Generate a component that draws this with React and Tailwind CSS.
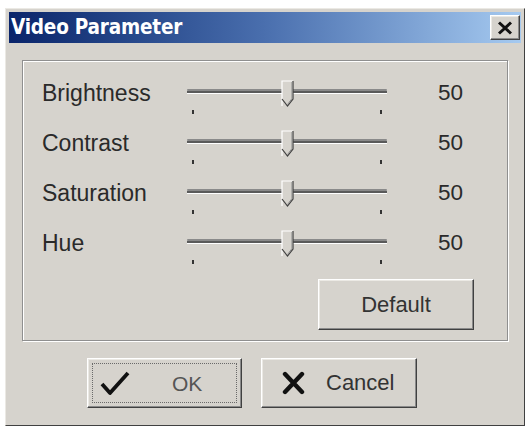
import React from "react";

const rows = [
  { label: "Brightness", value: 50 },
  { label: "Contrast", value: 50 },
  { label: "Saturation", value: 50 },
  { label: "Hue", value: 50 },
];

// classic trackbar: groove, down-pointing thumb, two end ticks
const Slider = () => (
  <svg width="200" height="50" viewBox="0 0 200 50" className="block">
    <rect x="0" y="21" width="200" height="2" fill="#8a8a8a" rx="1" />
    <rect x="0" y="23" width="200" height="2" fill="#5a5a5a" />
    <rect x="0" y="25" width="200" height="1" fill="#ffffff" />
    <rect x="5" y="42" width="2" height="4" fill="#333" />
    <rect x="193" y="42" width="2" height="4" fill="#333" />
    <polygon points="95,13 106,13 106,31 100.5,38 95,31" fill="#d6d3cd" />
    <polyline points="95,38 95,13 106,13" fill="none" stroke="#ffffff" strokeWidth="1.2" />
    <polyline points="106,13 106,31 100.5,38 95,31" fill="none" stroke="#404040" strokeWidth="1.2" />
    <polyline points="105,14 105,30.5 100.5,36.5" fill="none" stroke="#8a8a8a" strokeWidth="1" />
  </svg>
);

const raised =
  "border border-t-white border-l-white border-r-[#404040] border-b-[#404040] shadow-[inset_-1px_-1px_0_#8a8a8a,inset_1px_1px_0_#ebe9e4] bg-[#d6d3cd]";

export default function App() {
  return (
    <div className="w-[528px] h-[429px] bg-white overflow-hidden pt-[8px] font-['Liberation_Sans',Arial,sans-serif]">
      <div className="ml-[5px] w-[520px] h-[418px] border border-t-[#ebe9e4] border-l-[#ebe9e4] border-r-[#404040] border-b-[#404040] bg-[#d6d3cd] p-[3px] flex flex-col">
        {/* title bar */}
        <div className="h-[31px] bg-linear-to-r from-[#0a246a] via-[#4a6fae] to-[#a6caf0] flex items-center justify-between pl-[2px] pr-[1px]">
          <span className="text-white font-bold text-[20.5px] leading-none font-['DejaVu_Sans_Condensed','DejaVu_Sans',sans-serif] tracking-[-0.2px]">
            Video Parameter
          </span>
          <div className={`w-[30px] h-[25px] flex items-center justify-center ${raised}`}>
            <svg width="16" height="14" viewBox="0 0 16 14">
              <path d="M2 1.5 L14 12.5 M14 1.5 L2 12.5" stroke="#111" strokeWidth="3" />
            </svg>
          </div>
        </div>

        {/* group box */}
        <div className="mt-[17px] mx-[13px] h-[281px] border border-[#8f8f8f] shadow-[inset_1px_1px_0_#ffffff,1px_1px_0_#ffffff] pt-[7px] flex flex-col">
          {rows.map((r) => (
            <div key={r.label} className="h-[50px] flex items-center pl-[19px] pr-[44px]">
              <span className="w-[145px] text-[23px] text-[#2a2a2a] leading-none">{r.label}</span>
              <Slider />
              <span className="flex-1 text-right text-[22.5px] text-[#2a2a2a] leading-none">{r.value}</span>
            </div>
          ))}
          <div className="flex justify-end pr-[33px] mt-[11px]">
            <button className={`w-[156px] h-[51px] text-[22px] text-[#333] ${raised}`}>Default</button>
          </div>
        </div>

        {/* bottom buttons */}
        <div className="mt-[17px] flex gap-[19px] pl-[78px]">
          <button className={`w-[155px] h-[50px] p-[4px] ${raised}`}>
            <div className="w-full h-full border border-dotted border-[#6a6a6a] flex items-center pl-[7px]">
              <svg width="30" height="26" viewBox="0 0 30 26">
                <path d="M2 14 L10 23 L28 3" fill="none" stroke="#111" strokeWidth="3.8" strokeLinejoin="round" />
              </svg>
              <span className="ml-[42px] text-[21px] text-[#555] leading-none">OK</span>
            </div>
          </button>
          <button className={`w-[156px] h-[50px] flex items-center pl-[20px] ${raised}`}>
            <svg width="23" height="24" viewBox="0 0 23 24">
              <path d="M3 3 L20 21 M20 3 L3 21" fill="none" stroke="#111" strokeWidth="4.4" strokeLinecap="round" />
            </svg>
            <span className="ml-[21px] text-[22px] text-[#333] leading-none">Cancel</span>
          </button>
        </div>
      </div>
    </div>
  );
}
